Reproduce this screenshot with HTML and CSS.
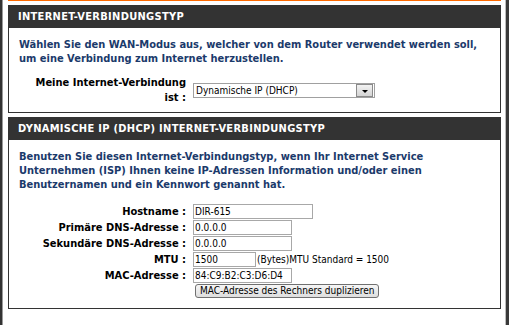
FILE: index.html
```html
<!DOCTYPE html>
<html lang="de">
<head>
<meta charset="utf-8">
<title>Internet-Verbindungstyp</title>
<link rel="stylesheet" href="styles.css">
</head>
<body>
<div class="page">
  <div class="rail-left"></div>
  <main class="content">
    <div class="orange"></div>
    <section class="box box-first">
      <h2 class="box-head">INTERNET-VERBINDUNGSTYP</h2>
      <div class="box-body">
        <p class="intro">Wählen Sie den WAN-Modus aus, welcher von dem Router verwendet werden soll, um eine Verbindung zum Internet herzustellen.</p>
        <div class="form form-one">
          <div class="lbl lbl-wrap">Meine Internet-Verbindung ist :</div>
          <div class="field">
            <div class="select">
              <span class="select-text">Dynamische IP (DHCP)</span>
              <span class="select-btn"><span class="arrow"></span></span>
            </div>
          </div>
        </div>
      </div>
    </section>
    <section class="box box-second">
      <h2 class="box-head">DYNAMISCHE IP (DHCP) INTERNET-VERBINDUNGSTYP</h2>
      <div class="box-body">
        <p class="intro">Benutzen Sie diesen Internet-Verbindungstyp, wenn Ihr Internet Service Unternehmen (ISP) Ihnen keine IP-Adressen Information und/oder einen Benutzernamen und ein Kennwort genannt hat.</p>
        <div class="form form-two">
          <div class="lbl">Hostname :</div>
          <div class="field"><span class="inp w-host">DIR-615</span></div>
          <div class="lbl">Primäre DNS-Adresse :</div>
          <div class="field"><span class="inp w-dns">0.0.0.0</span></div>
          <div class="lbl">Sekundäre DNS-Adresse :</div>
          <div class="field"><span class="inp w-dns">0.0.0.0</span></div>
          <div class="lbl">MTU :</div>
          <div class="field"><span class="inp w-mtu">1500</span><span class="note">(Bytes)MTU Standard = 1500</span></div>
          <div class="lbl">MAC-Adresse :</div>
          <div class="field"><span class="inp w-dns">84:C9:B2:C3:D6:D4</span></div>
          <div class="lbl"></div>
          <div class="field"><span class="btn">MAC-Adresse des Rechners duplizieren</span></div>
        </div>
      </div>
    </section>
  </main>
  <div class="rail-right"></div>
</div>
</body>
</html>
```

FILE: styles.css
```css
html, body {
  margin: 0;
  padding: 0;
  background: #ffffff;
}

.page {
  display: flex;
  height: 325px;
  overflow: hidden;
}

.rail-left {
  width: 2px;
  background: #333333;
  border-right: 1px solid #9a9a9a;
}

.rail-right {
  width: 3px;
  background: #3a3a3a;
  border-left: 1px solid #bdbdbd;
}

.content {
  flex: 1;
  padding: 0 4px 0 5px;
}

.orange {
  height: 1px;
  background: #ff6a00;
  margin-bottom: 4px;
}

.box-second {
  margin-top: 4px;
}

.box-head {
  margin: 0;
  height: 23px;
  line-height: 23px;
  padding-left: 10px;
  background: #333333;
  color: #ffffff;
  font-family: "DejaVu Sans Condensed", "DejaVu Sans", sans-serif;
  font-weight: bold;
  font-size: 11px;
  letter-spacing: 0.3px;
}

.box-body {
  border: 1px solid #333333;
  border-top: none;
  padding: 10px 10px 9px 9px;
  font-family: "DejaVu Sans Condensed", "DejaVu Sans", sans-serif;
  font-size: 11px;
}

.box-first .box-body {
  padding-bottom: 7px;
}

.intro {
  margin: 0 0 9px 1px;
  line-height: 14px;
  font-weight: bold;
  color: #1b3a6b;
}

.box-second .intro {
  margin-bottom: 11px;
}

.form {
  display: grid;
  grid-template-columns: 168px 1fr;
  column-gap: 7px;
  align-items: center;
}

.form-two {
  grid-auto-rows: 16px;
}

.lbl {
  text-align: right;
  font-weight: bold;
  color: #000000;
  line-height: 15px;
  white-space: nowrap;
}

.lbl-wrap {
  white-space: normal;
  justify-self: end;
  max-width: 155px;
}

.field {
  display: flex;
  align-items: center;
  font-size: 10px;
  color: #000000;
}

.select {
  width: 178px;
  height: 13px;
  border: 1px solid #a0a0a0;
  display: flex;
  align-items: center;
  justify-content: space-between;
  padding-left: 2px;
}

.select-text {
  font-size: 10px;
  line-height: 13px;
}

.select-btn {
  width: 15px;
  height: 11px;
  margin-right: 1px;
  border: 1px solid #8a8a8a;
  background: linear-gradient(#f2f2f2, #d4d4d4);
  display: flex;
  align-items: center;
  justify-content: center;
}

.arrow {
  width: 0;
  height: 0;
  border-left: 3px solid transparent;
  border-right: 3px solid transparent;
  border-top: 3px solid #000000;
  margin-top: 2px;
}

.inp {
  display: inline-block;
  box-sizing: border-box;
  height: 15px;
  line-height: 13px;
  border: 1px solid #a8a8a8;
  padding: 0 1px;
  font-size: 10px;
  background: #ffffff;
  white-space: nowrap;
  overflow: hidden;
}

.w-host { width: 120px; }
.w-dns { width: 99px; }
.w-mtu { width: 63px; }

.note {
  margin-left: 1px;
  font-size: 10px;
}

.btn {
  margin-left: 2px;
  height: 14px;
  box-sizing: border-box;
  line-height: 12px;
  padding: 0 4px;
  border: 1px solid #707070;
  border-radius: 3px;
  background: linear-gradient(#f6f6f6, #dedede);
  font-size: 10px;
  white-space: nowrap;
}
```
